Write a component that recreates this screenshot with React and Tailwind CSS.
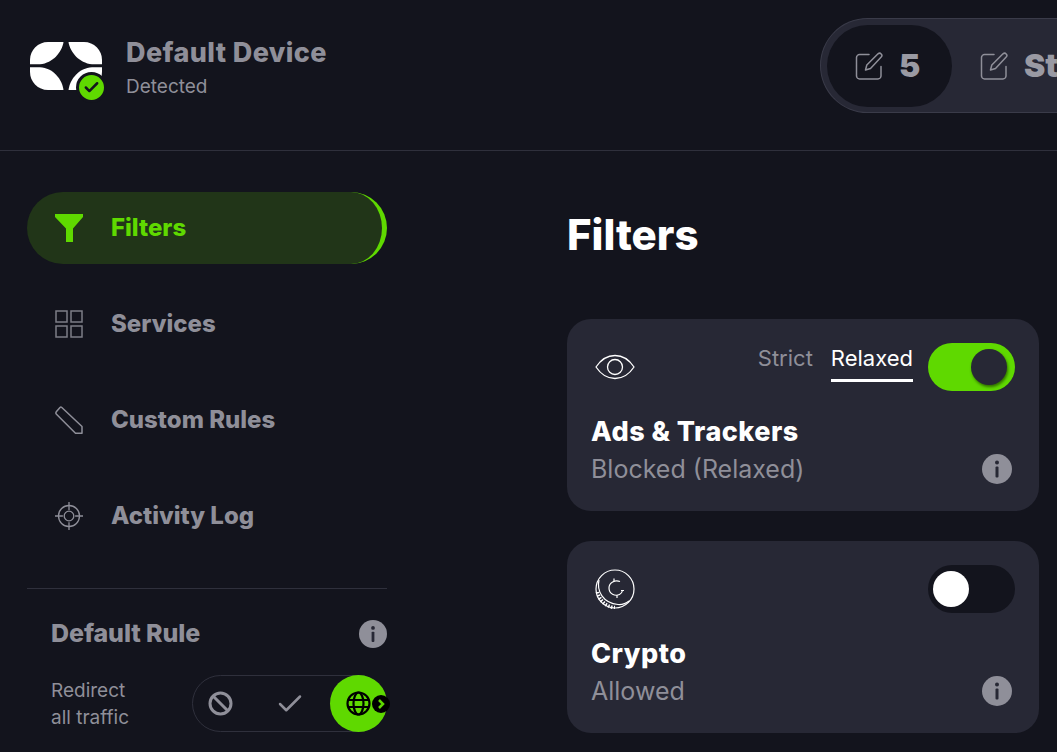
import { Check } from 'lucide-react';

const NAV_ITEMS = [
  { label: 'Services', icon: <ServicesIcon /> },
  { label: 'Custom Rules', icon: <RulesIcon /> },
  { label: 'Activity Log', icon: <LogIcon /> }
];

function Logo() {
  return (
    <svg width="72" height="48" viewBox="0 0 72 48" fill="#fff">
      <path d="M18 0H33.500C32 10 23 21 10 22.300H0V18C0 8 8 0 18 0Z" />
      <path d="M54 0H38.500C40 10 49 21 62 22.300H72V18C72 8 64 0 54 0Z" />
      <path d="M0 25.300H10C23 26 32 37 33.500 48H18C8 48 0 40 0 30Z" />
      <path d="M72 25.300H62C49 26 40 37 38.500 48H54C64 48 72 40 72 30Z" />
    </svg>
  );
}

function EditIcon() {
  return (
    <svg width="28" height="28" viewBox="0 0 28 28" fill="none" stroke="#8f8f99" strokeWidth="1.500" strokeLinejoin="round" strokeLinecap="round">
      <path d="M14 2.500H4.500C3 2.500 1.500 4 1.500 5.500V24C1.500 25.500 3 27 4.500 27H23C24.500 27 26 25.500 26 24V14.500" />
      <path d="M23 1.800C24 1 25.300 1 26.200 2C27.100 2.900 27.100 4.100 26.200 5L15.500 16.500L10.500 18L11.800 13Z" />
    </svg>
  );
}

function FilterIcon() {
  return (
    <svg width="28" height="28" viewBox="0 0 28 28" fill="#5fd900">
      <path d="M0 0H28V3L18 14.500V28H11V14.500L0 3Z" />
    </svg>
  );
}

function ServicesIcon() {
  return (
    <svg width="28" height="28" viewBox="0 0 28 28" fill="none" stroke="#7d7d87" strokeWidth="1.500">
      <rect x="1" y="1" width="11" height="11" />
      <rect x="16" y="1" width="11" height="11" />
      <rect x="1" y="16" width="11" height="11" />
      <rect x="16" y="16" width="11" height="11" />
    </svg>
  );
}

function RulesIcon() {
  return (
    <svg width="28" height="28" viewBox="0 0 28 28" fill="none" stroke="#8f8f99" strokeWidth="1.500" strokeLinejoin="round">
      <path d="M1.500 5.500L5 1.500C5.500 1 6.200 1 6.800 1.500L27 20.500V27.200H20.500L1.500 8.200C.8 7.500 .8 6.300 1.500 5.500Z" />
    </svg>
  );
}

function LogIcon() {
  return (
    <svg width="32" height="32" viewBox="0 0 32 32" fill="none" stroke="#8f8f99" strokeWidth="1.500">
      <circle cx="16" cy="16" r="12" />
      <circle cx="16" cy="16" r="5.500" />
      <path d="M16 0V9M16 23V32M0 16H9M23 16H32" />
    </svg>
  );
}

function InfoIcon({ size }) {
  return (
    <svg width={size} height={size} viewBox="0 0 30 30">
      <circle cx="15" cy="15" r="15" fill="#8f8f99" />
      <circle cx="15" cy="8.500" r="2" fill="#272835" />
      <rect x="13.500" y="12.500" width="3" height="11" rx="1" fill="#272835" />
    </svg>
  );
}

function EyeIcon() {
  return (
    <svg width="40" height="26" viewBox="0 0 40 26" fill="none" stroke="#fff" strokeWidth="1.300">
      <path d="M1 13C6 5.500 12.500 1.500 20 1.500C27.500 1.500 34 5.500 39 13C34 20.500 27.500 24.500 20 24.500C12.500 24.500 6 20.500 1 13Z" />
      <circle cx="20" cy="13" r="7.500" />
    </svg>
  );
}

function CoinIcon() {
  return (
    <svg width="40" height="40" viewBox="0 0 40 40" fill="none" stroke="#fff" strokeWidth="1.200">
      <circle cx="20" cy="20" r="19" />
      <path d="M4 11C1.500 22 8 34 23 35.500C27 35.800 31 34.500 34 32" />
      <path d="M2.500 23C4 31 11 38 20 38.500" strokeWidth="3.500" strokeDasharray="1.500 1.500" />
      <path d="M25 12.500C20 10.500 14 13.500 14 19C14 25 20 27.500 24.500 25.500C26 24.800 27 23.500 27.300 22" />
      <path d="M19 9.500V12.500M22 26V29M26 21.500H29" />
    </svg>
  );
}

function BanIcon() {
  return (
    <svg width="25" height="25" viewBox="0 0 25 25" fill="none" stroke="#8f8f99" strokeWidth="3">
      <circle cx="12.500" cy="12.500" r="10.500" />
      <path d="M5 5L20 20" />
    </svg>
  );
}

function GlobeIcon() {
  return (
    <svg width="25" height="25" viewBox="0 0 25 25" fill="none" stroke="#000" strokeWidth="2.200">
      <circle cx="12.500" cy="12.500" r="11" />
      <ellipse cx="12.500" cy="12.500" rx="5" ry="11" />
      <path d="M2 9H23M2 16H23" />
    </svg>
  );
}

function FilterCard({ icon, title, status, on, children }) {
  return (
    <div className="w-[472px] h-[192px] rounded-[24px] bg-[#272835] px-6 py-6 flex flex-col">
      <div className="flex items-start h-12">
        <div className="w-12 h-12 flex items-center justify-center">{icon}</div>
        <div className="ml-auto flex items-start">
          {children}
          {on ? (
            <div className="w-[87px] h-12 rounded-full bg-[#5fd900] flex items-center justify-end pr-2">
              <div className="w-9 h-9 rounded-full bg-[#272835] shadow-[1px_2px_3px_rgba(0,0,0,0.5)]" />
            </div>
          ) : (
            <div className="w-[87px] h-12 rounded-full bg-[#13141d] flex items-center pl-[5px]">
              <div className="w-9 h-9 rounded-full bg-white" />
            </div>
          )}
        </div>
      </div>
      <div className="mt-[22px] text-[27px] leading-[38px] font-extrabold text-white tracking-[0.5px]">{title}</div>
      <div className="flex items-center justify-between h-[38px]">
        <span className="text-[25px] text-[#8f8f99]">{status}</span>
        <span className="mr-[3px] -mt-px"><InfoIcon size={30} /></span>
      </div>
    </div>
  );
}

export default function App() {
  return (
    <div className="w-[1057px] h-[752px] overflow-hidden bg-[#13141d] font-['Inter',sans-serif]">
      <header className="h-[151px] border-b border-[#2f303c] flex items-start">
        <div className="relative ml-[30px] mt-[42px] w-[72px] h-12">
          <Logo />
          <div className="absolute left-[46px] top-[30px] w-[31px] h-[31px] rounded-full bg-[#5fd900] border-[3px] border-[#13141d] flex items-center justify-center">
            <Check size={17} strokeWidth={3.500} color="#13141d" />
          </div>
        </div>
        <div className="ml-6 mt-[34px]">
          <div className="text-[27px] leading-[38px] font-extrabold text-[#8f8f99] tracking-[0.4px]">Default Device</div>
          <div className="text-[19px] leading-[26px] text-[#8f8f99] mt-[2px]">Detected</div>
        </div>
        <div className="ml-auto mt-[18px] w-[237px] h-[95px] shrink-0 rounded-l-full bg-[#272835] border border-r-0 border-[#3a3b49] pl-[6px] pt-[6px] flex items-start overflow-hidden">
          <div className="w-[125px] h-[82px] shrink-0 rounded-full bg-[#13141d] flex items-center pl-[28px] gap-[16px]">
            <EditIcon />
            <span className="text-[32px] font-black text-[#9a9aa3]">5</span>
          </div>
          <div className="h-[82px] shrink-0 flex items-center pl-[28px] gap-[16px]">
            <EditIcon />
            <span className="text-[32px] font-black text-[#9a9aa3]">Strict</span>
          </div>
        </div>
      </header>

      <div className="flex items-start">
        <aside className="ml-[27px] w-[360px] shrink-0 pt-[41px]">
          <div className="h-[72px] rounded-full bg-[#213518] border-r-[5px] border-[#5fd900] flex items-center pl-7 gap-7">
            <FilterIcon />
            <span className="text-[24px] font-extrabold text-[#5fd900]">Filters</span>
          </div>
          {NAV_ITEMS.map(item => (
            <div key={item.label} className="h-[72px] mt-6 flex items-center pl-7 gap-7">
              <span className="w-7 h-8 flex items-center justify-center">{item.icon}</span>
              <span className="text-[24px] font-extrabold text-[#8f8f99]">{item.label}</span>
            </div>
          ))}
          <div className="mt-[36px] border-t border-[#2f303c] pt-[27px] pl-6">
            <div className="flex items-center justify-between h-9">
              <span className="text-[25px] font-extrabold text-[#8f8f99] tracking-[-0.1px]">Default Rule</span>
              <InfoIcon size={28} />
            </div>
            <div className="flex items-center justify-between mt-[23px]">
              <div className="text-[19px] leading-[27px] text-[#8f8f99]">Redirect<br />all traffic</div>
              <div className="relative w-[195px] h-[57px] rounded-full border border-[#2f303c] flex items-center">
                <span className="ml-[15px]"><BanIcon /></span>
                <Check className="ml-[42px]" size={30} strokeWidth={2} color="#8f8f99" />
                <div className="absolute right-[-1px] top-[-1px] w-[57px] h-[57px] rounded-full bg-[#5fd900] flex items-center justify-center">
                  <GlobeIcon />
                </div>
                <div className="absolute right-[-4px] top-[19px] w-[18px] h-[18px] rounded-full bg-black flex items-center justify-center">
                  <svg width="8" height="10" viewBox="0 0 8 10" fill="none" stroke="#5fd900" strokeWidth="2.500"><path d="M2 1L6 5L2 9" /></svg>
                </div>
              </div>
            </div>
          </div>
        </aside>

        <main className="ml-[180px] pt-[58px] shrink-0">
          <h1 className="text-[42px] leading-[52px] font-extrabold text-white">Filters</h1>
          <div className="mt-[58px] flex flex-col gap-[30px]">
            <FilterCard icon={<EyeIcon />} title="Ads & Trackers" status="Blocked (Relaxed)" on>
              <div className="flex items-start gap-[18px] mr-[15px] text-[22px] leading-[30px]">
                <span className="text-[#8f8f99]">Strict</span>
                <span className="text-white h-[39px] border-b-[3px] border-white">Relaxed</span>
              </div>
            </FilterCard>
            <FilterCard icon={<CoinIcon />} title="Crypto" status="Allowed" />
          </div>
        </main>
      </div>
    </div>
  );
}
